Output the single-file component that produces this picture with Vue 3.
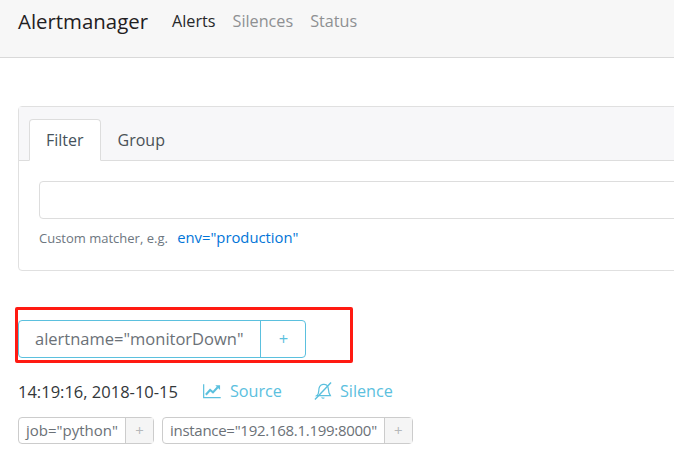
<script setup>
const labels = [
  { id: 1, text: 'job="python"' },
  { id: 2, text: 'instance="192.168.1.199:8000"' },
]
</script>

<template>
  <div class="page">
    <nav class="navbar">
      <span class="brand">Alertmanager</span>
      <a class="nav-link active">Alerts</a>
      <a class="nav-link">Silences</a>
      <a class="nav-link">Status</a>
    </nav>

    <div class="container">
      <div class="card">
        <div class="card-header">
          <a class="tab active">Filter</a>
          <a class="tab">Group</a>
        </div>
        <div class="card-body">
          <div class="filter-input"></div>
          <small class="hint">Custom matcher, e.g. <a class="example">env="production"</a></small>
        </div>
      </div>

      <div class="group-head">
        <span class="group-label">alertname="monitorDown"</span>
        <span class="group-add">+</span>
      </div>

      <div class="alert-meta">
        <span class="time">14:19:16, 2018-10-15</span>
        <a class="action">
          <svg class="icon" width="18" height="16" viewBox="0 0 19 16" fill="none" stroke="currentColor">
            <path d="M.7 1v14h18" stroke-width="1.3" />
            <path d="M3 12l4.500-5 3 2.500 5-5.500" stroke-width="2.200" />
            <path d="M13 2h5v5z" fill="currentColor" stroke="none" />
          </svg>
          Source
        </a>
        <a class="action silence">
          <svg class="icon" width="18" height="20" viewBox="0 0 19 20" fill="none" stroke="currentColor">
            <path d="M5 10c0-4 1.500-6.500 4.500-7 3-.5 5 1 5.500 4l.8 5 1.500 3H2.800c1.400-1 2.200-2.700 2.200-5z" stroke-width="1.300" />
            <path d="M7.500 16.500a2.200 2.200 0 0 0 4 .5z" fill="currentColor" stroke="none" />
            <path d="M1 19L18 1" stroke-width="1.500" />
          </svg>
          Silence
        </a>
      </div>

      <div class="labels">
        <div v-for="label in labels" :key="label.id" class="label">
          <span class="label-text">{{ label.text }}</span>
          <span class="label-add">+</span>
        </div>
      </div>
    </div>

    <div class="highlight"></div>
  </div>
</template>

<style scoped>
.page {
  position: relative;
  width: 674px;
  height: 450px;
  overflow: hidden;
  background: #fff;
  font-family: "Open Sans", "Noto Sans", sans-serif;
  color: #373a3c;
}

.navbar {
  display: flex;
  align-items: center;
  height: 57px;
  padding: 0 18px;
  background: #f7f7f7;
  border-bottom: 1px solid #d9d9d9;
  box-sizing: content-box;
}

.brand {
  font-size: 20.400px;
  color: #1f2022;
  margin-right: 24px;
  margin-top: -15px;
}

.nav-link {
  font-size: 16.200px;
  color: #8e9092;
  margin-right: 17px;
  margin-top: -16px;
}

.nav-link.active {
  color: #26282a;
}

.container {
  width: 1000px;
  padding: 48px 18px 0;
  box-sizing: border-box;
}

.card {
  border: 1px solid #e0e0e0;
  border-radius: 4px;
  height: 165px;
  box-sizing: border-box;
}

.card-header {
  display: flex;
  height: 54px;
  padding: 12px 10px 0;
  background: #f7f7f9;
  border-bottom: 1px solid #ddd;
  box-sizing: border-box;
}

.tab {
  height: 42px;
  padding: 0 16px;
  line-height: 41px;
  font-size: 16px;
  color: #4a5156;
  box-sizing: border-box;
  border: 1px solid transparent;
  border-radius: 4px 4px 0 0;
}

.tab.active {
  background: #fff;
  border-color: #ddd #ddd #fff;
  color: #45525c;
}

.card-body {
  padding: 20px 20px 0;
}

.filter-input {
  height: 38px;
  border: 1px solid #ddd;
  border-radius: 4px;
  box-sizing: border-box;
}

.hint {
  display: block;
  margin-top: 9px;
  font-size: 13px;
  line-height: 18px;
  color: #6d7680;
}

.example {
  margin-left: 6px;
  font-size: 14.800px;
  color: #0275d8;
}

.group-head {
  display: inline-flex;
  margin-top: 49px;
  height: 38px;
  border: 1px solid #5bc0de;
  border-radius: 4px;
  box-sizing: border-box;
  font-size: 16.500px;
  line-height: 35px;
}

.group-label {
  padding: 0 17px 0 16px;
  color: #6b7177;
  border-right: 1px solid #5bc0de;
}

.group-add {
  width: 44px;
  text-align: center;
  color: #5bc0de;
}

.alert-meta {
  display: flex;
  align-items: center;
  margin-top: 18px;
  height: 30px;
  font-size: 16.200px;
}

.time {
  font-size: 16.500px;
  color: #33373a;
  margin-right: 25px;
}

.action {
  display: flex;
  align-items: center;
  gap: 9px;
  margin-right: 32px;
  color: #5bc0de;
}

.action.silence {
  gap: 8px;
}

.labels {
  display: flex;
  gap: 8px;
  margin-top: 11px;
}

.label {
  display: flex;
  height: 27px;
  border: 1px solid #ccc;
  border-radius: 4px;
  box-sizing: border-box;
  font-size: 15px;
  line-height: 25px;
}

.label-text {
  padding: 0 7px;
  color: #6b7177;
  border-right: 1px solid #ccc;
}

.label:last-child .label-text {
  letter-spacing: -0.28px;
}

.label-add {
  width: 27px;
  text-align: center;
  color: #b5b8ba;
  background: #f5f5f5;
}

.highlight {
  position: absolute;
  left: 15px;
  top: 307px;
  width: 338px;
  height: 56px;
  border: 3px solid #ff1a12;
  border-radius: 2px;
  box-sizing: border-box;
}
</style>
